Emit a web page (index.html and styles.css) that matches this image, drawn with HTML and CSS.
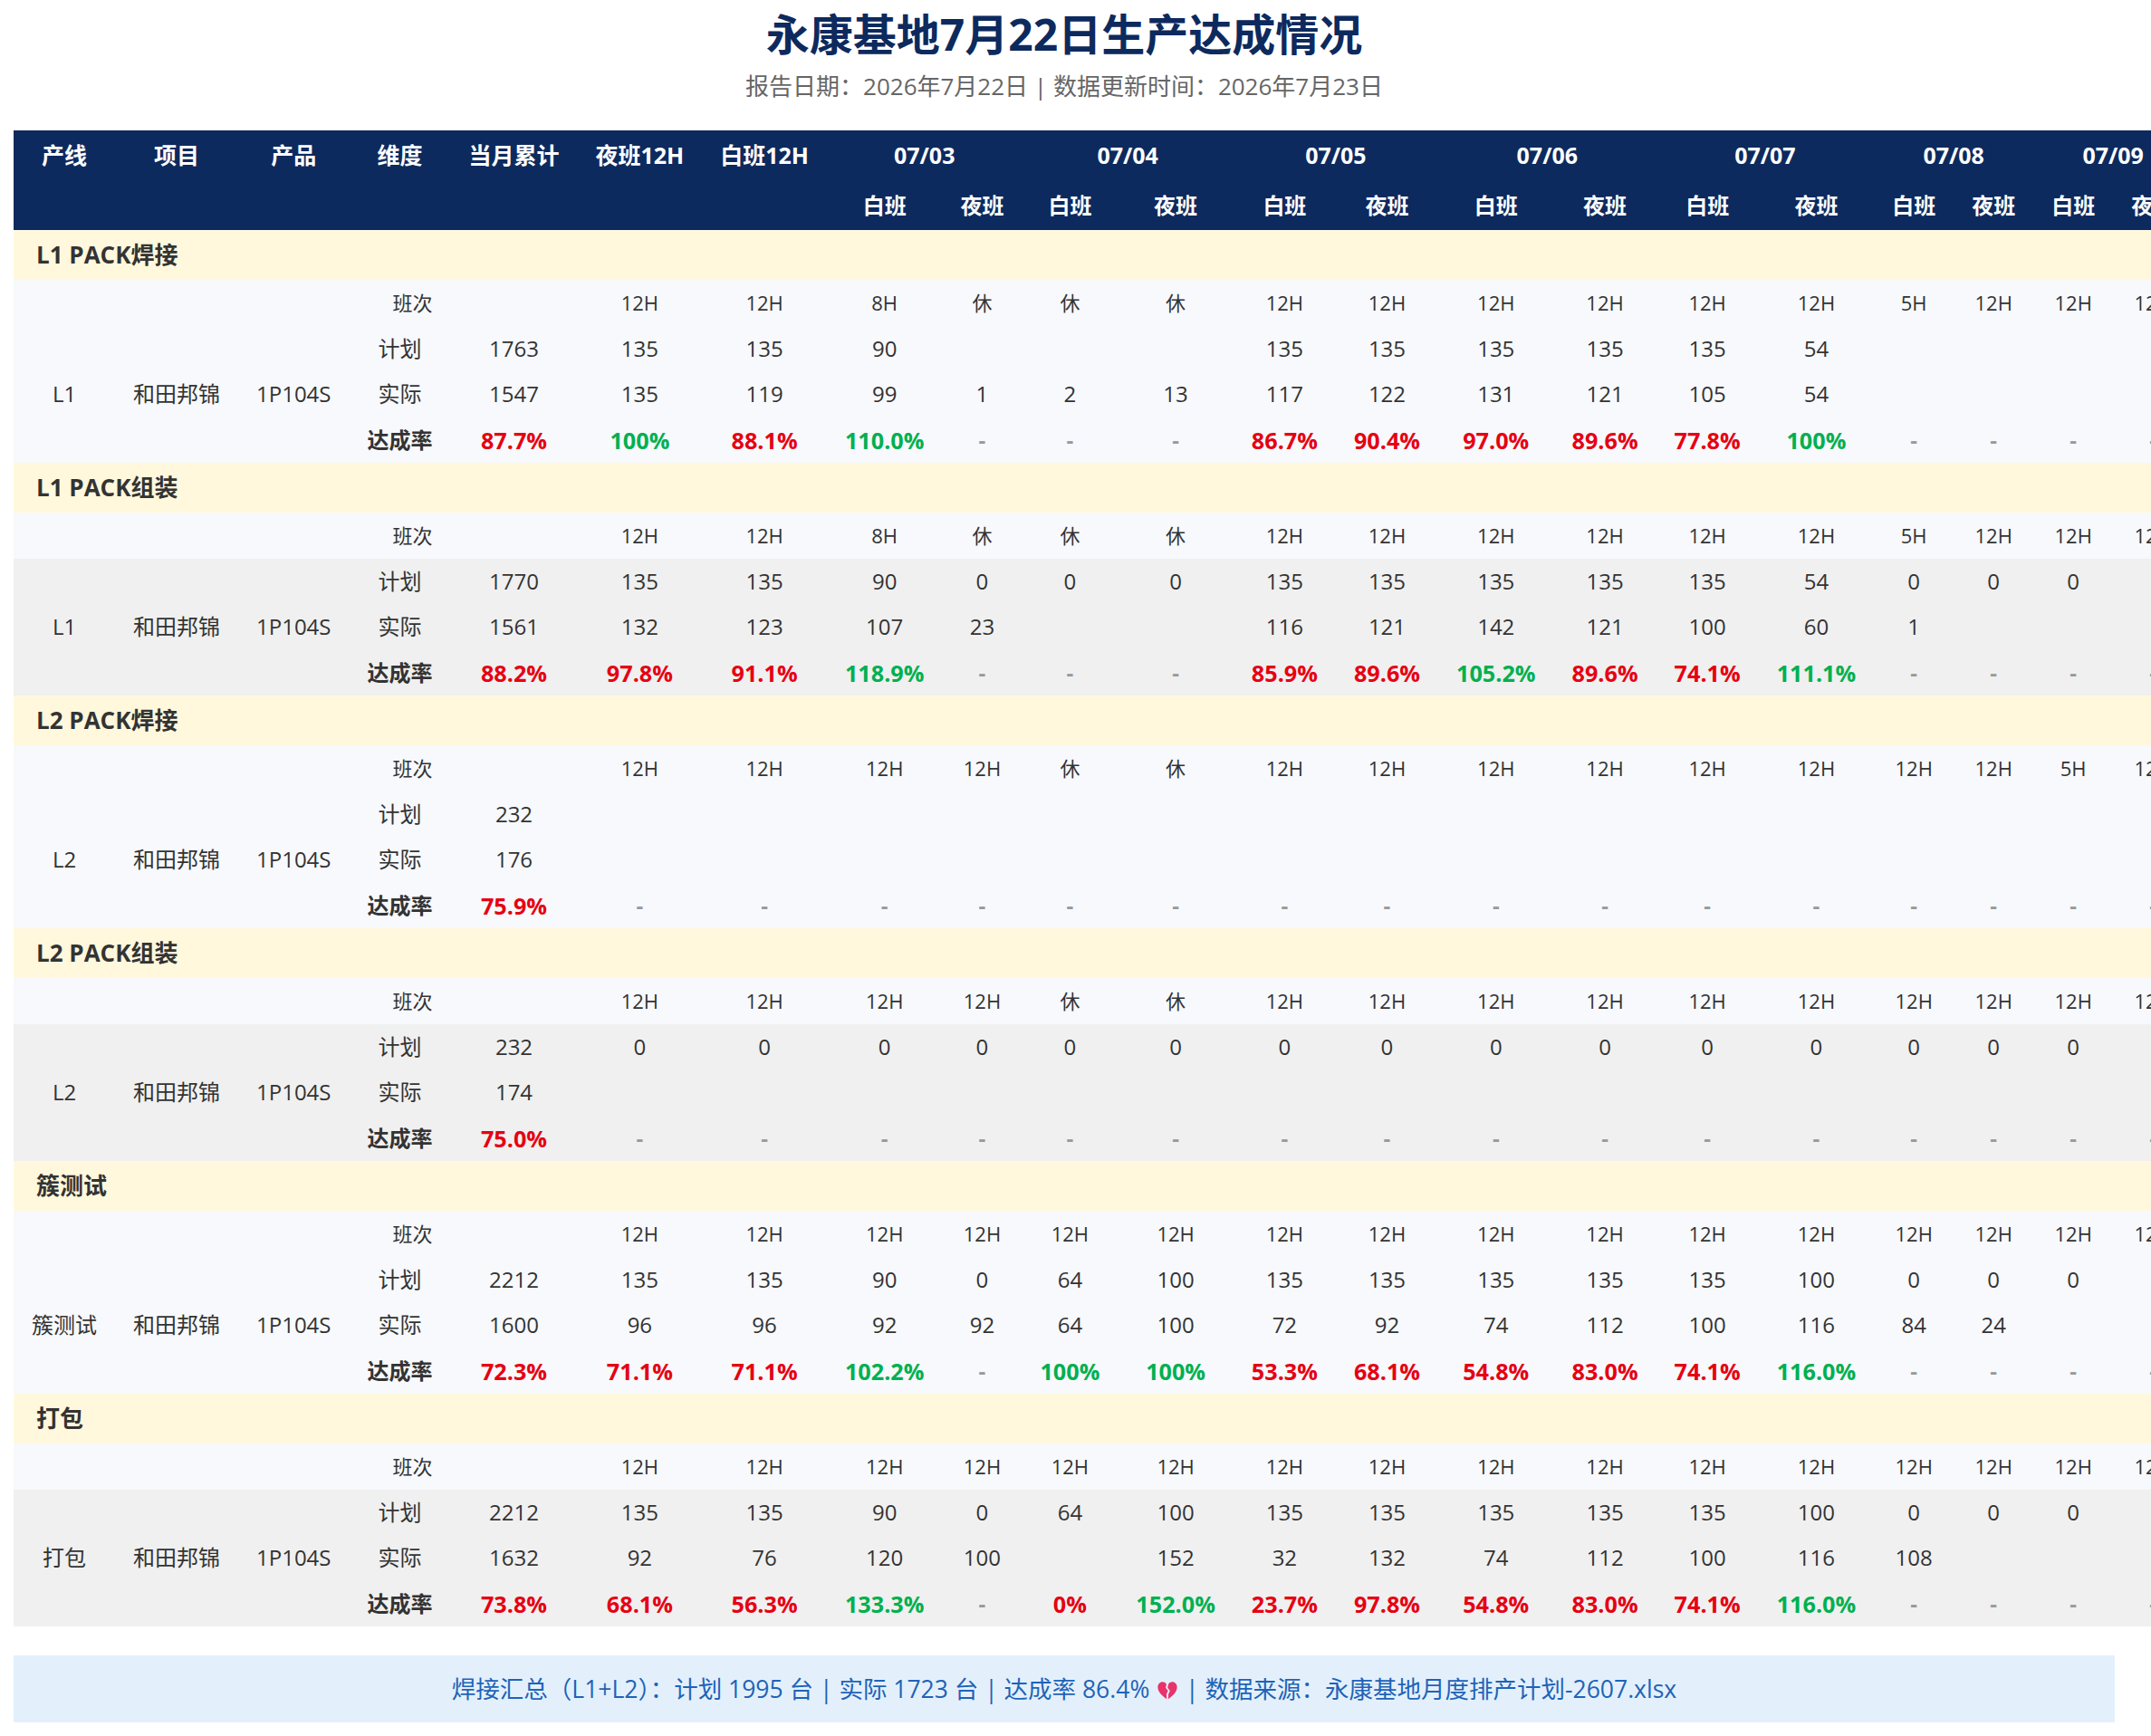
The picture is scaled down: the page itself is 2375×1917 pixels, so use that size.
FILE: index.html
```html
<!DOCTYPE html>
<html lang="zh-CN">
<head>
<meta charset="utf-8">
<title>永康基地7月22日生产达成情况</title>
<link rel="stylesheet" href="styles.css">
</head>
<body>
<h1 class="title">永康基地7月22日生产达成情况</h1>
<p class="subtitle">报告日期：2026年7月22日 | 数据更新时间：2026年7月23日</p>
<div class="table-wrap">
<table class="report">
<thead>
<tr class="top">
<th>产线</th><th>项目</th><th>产品</th><th>维度</th><th>当月累计</th><th>夜班12H</th><th>白班12H</th>
<th colspan="2">07/03</th><th colspan="2">07/04</th><th colspan="2">07/05</th><th colspan="2">07/06</th><th colspan="2">07/07</th><th colspan="2">07/08</th><th colspan="2">07/09</th>
</tr>
<tr>
<th></th><th></th><th></th><th></th><th></th><th></th><th></th>
<th>白班</th><th>夜班</th><th>白班</th><th>夜班</th><th>白班</th><th>夜班</th><th>白班</th><th>夜班</th><th>白班</th><th>夜班</th><th>白班</th><th>夜班</th><th>白班</th><th>夜班</th>
</tr>
</thead>

<tbody>
<tr class="grp"><td colspan="21">L1 PACK焊接</td></tr>
<tr class="shift"><td></td><td></td><td></td><td class="lbl">班次</td><td></td><td>12H</td><td>12H</td><td>8H</td><td>休</td><td>休</td><td>休</td><td>12H</td><td>12H</td><td>12H</td><td>12H</td><td>12H</td><td>12H</td><td>5H</td><td>12H</td><td>12H</td><td>12H</td></tr>
<tr><td rowspan="3">L1</td><td rowspan="3">和田邦锦</td><td rowspan="3">1P104S</td><td>计划</td><td>1763</td><td>135</td><td>135</td><td>90</td><td></td><td></td><td></td><td>135</td><td>135</td><td>135</td><td>135</td><td>135</td><td>54</td><td></td><td></td><td></td><td></td></tr>
<tr><td>实际</td><td>1547</td><td>135</td><td>119</td><td>99</td><td>1</td><td>2</td><td>13</td><td>117</td><td>122</td><td>131</td><td>121</td><td>105</td><td>54</td><td></td><td></td><td></td><td></td></tr>
<tr><td class="b">达成率</td><td class="r">87.7%</td><td class="g">100%</td><td class="r">88.1%</td><td class="g">110.0%</td><td class="d">-</td><td class="d">-</td><td class="d">-</td><td class="r">86.7%</td><td class="r">90.4%</td><td class="r">97.0%</td><td class="r">89.6%</td><td class="r">77.8%</td><td class="g">100%</td><td class="d">-</td><td class="d">-</td><td class="d">-</td><td class="d">-</td></tr>
</tbody>

<tbody class="alt">
<tr class="grp"><td colspan="21">L1 PACK组装</td></tr>
<tr class="shift"><td></td><td></td><td></td><td class="lbl">班次</td><td></td><td>12H</td><td>12H</td><td>8H</td><td>休</td><td>休</td><td>休</td><td>12H</td><td>12H</td><td>12H</td><td>12H</td><td>12H</td><td>12H</td><td>5H</td><td>12H</td><td>12H</td><td>12H</td></tr>
<tr><td rowspan="3">L1</td><td rowspan="3">和田邦锦</td><td rowspan="3">1P104S</td><td>计划</td><td>1770</td><td>135</td><td>135</td><td>90</td><td>0</td><td>0</td><td>0</td><td>135</td><td>135</td><td>135</td><td>135</td><td>135</td><td>54</td><td>0</td><td>0</td><td>0</td><td></td></tr>
<tr><td>实际</td><td>1561</td><td>132</td><td>123</td><td>107</td><td>23</td><td></td><td></td><td>116</td><td>121</td><td>142</td><td>121</td><td>100</td><td>60</td><td>1</td><td></td><td></td><td></td></tr>
<tr><td class="b">达成率</td><td class="r">88.2%</td><td class="r">97.8%</td><td class="r">91.1%</td><td class="g">118.9%</td><td class="d">-</td><td class="d">-</td><td class="d">-</td><td class="r">85.9%</td><td class="r">89.6%</td><td class="g">105.2%</td><td class="r">89.6%</td><td class="r">74.1%</td><td class="g">111.1%</td><td class="d">-</td><td class="d">-</td><td class="d">-</td><td class="d">-</td></tr>
</tbody>

<tbody>
<tr class="grp"><td colspan="21">L2 PACK焊接</td></tr>
<tr class="shift"><td></td><td></td><td></td><td class="lbl">班次</td><td></td><td>12H</td><td>12H</td><td>12H</td><td>12H</td><td>休</td><td>休</td><td>12H</td><td>12H</td><td>12H</td><td>12H</td><td>12H</td><td>12H</td><td>12H</td><td>12H</td><td>5H</td><td>12H</td></tr>
<tr><td rowspan="3">L2</td><td rowspan="3">和田邦锦</td><td rowspan="3">1P104S</td><td>计划</td><td>232</td><td></td><td></td><td></td><td></td><td></td><td></td><td></td><td></td><td></td><td></td><td></td><td></td><td></td><td></td><td></td><td></td></tr>
<tr><td>实际</td><td>176</td><td></td><td></td><td></td><td></td><td></td><td></td><td></td><td></td><td></td><td></td><td></td><td></td><td></td><td></td><td></td><td></td></tr>
<tr><td class="b">达成率</td><td class="r">75.9%</td><td class="d">-</td><td class="d">-</td><td class="d">-</td><td class="d">-</td><td class="d">-</td><td class="d">-</td><td class="d">-</td><td class="d">-</td><td class="d">-</td><td class="d">-</td><td class="d">-</td><td class="d">-</td><td class="d">-</td><td class="d">-</td><td class="d">-</td><td class="d">-</td></tr>
</tbody>

<tbody class="alt">
<tr class="grp"><td colspan="21">L2 PACK组装</td></tr>
<tr class="shift"><td></td><td></td><td></td><td class="lbl">班次</td><td></td><td>12H</td><td>12H</td><td>12H</td><td>12H</td><td>休</td><td>休</td><td>12H</td><td>12H</td><td>12H</td><td>12H</td><td>12H</td><td>12H</td><td>12H</td><td>12H</td><td>12H</td><td>12H</td></tr>
<tr><td rowspan="3">L2</td><td rowspan="3">和田邦锦</td><td rowspan="3">1P104S</td><td>计划</td><td>232</td><td>0</td><td>0</td><td>0</td><td>0</td><td>0</td><td>0</td><td>0</td><td>0</td><td>0</td><td>0</td><td>0</td><td>0</td><td>0</td><td>0</td><td>0</td><td></td></tr>
<tr><td>实际</td><td>174</td><td></td><td></td><td></td><td></td><td></td><td></td><td></td><td></td><td></td><td></td><td></td><td></td><td></td><td></td><td></td><td></td></tr>
<tr><td class="b">达成率</td><td class="r">75.0%</td><td class="d">-</td><td class="d">-</td><td class="d">-</td><td class="d">-</td><td class="d">-</td><td class="d">-</td><td class="d">-</td><td class="d">-</td><td class="d">-</td><td class="d">-</td><td class="d">-</td><td class="d">-</td><td class="d">-</td><td class="d">-</td><td class="d">-</td><td class="d">-</td></tr>
</tbody>

<tbody>
<tr class="grp"><td colspan="21">簇测试</td></tr>
<tr class="shift"><td></td><td></td><td></td><td class="lbl">班次</td><td></td><td>12H</td><td>12H</td><td>12H</td><td>12H</td><td>12H</td><td>12H</td><td>12H</td><td>12H</td><td>12H</td><td>12H</td><td>12H</td><td>12H</td><td>12H</td><td>12H</td><td>12H</td><td>12H</td></tr>
<tr><td rowspan="3">簇测试</td><td rowspan="3">和田邦锦</td><td rowspan="3">1P104S</td><td>计划</td><td>2212</td><td>135</td><td>135</td><td>90</td><td>0</td><td>64</td><td>100</td><td>135</td><td>135</td><td>135</td><td>135</td><td>135</td><td>100</td><td>0</td><td>0</td><td>0</td><td></td></tr>
<tr><td>实际</td><td>1600</td><td>96</td><td>96</td><td>92</td><td>92</td><td>64</td><td>100</td><td>72</td><td>92</td><td>74</td><td>112</td><td>100</td><td>116</td><td>84</td><td>24</td><td></td><td></td></tr>
<tr><td class="b">达成率</td><td class="r">72.3%</td><td class="r">71.1%</td><td class="r">71.1%</td><td class="g">102.2%</td><td class="d">-</td><td class="g">100%</td><td class="g">100%</td><td class="r">53.3%</td><td class="r">68.1%</td><td class="r">54.8%</td><td class="r">83.0%</td><td class="r">74.1%</td><td class="g">116.0%</td><td class="d">-</td><td class="d">-</td><td class="d">-</td><td class="d">-</td></tr>
</tbody>

<tbody class="alt">
<tr class="grp"><td colspan="21">打包</td></tr>
<tr class="shift"><td></td><td></td><td></td><td class="lbl">班次</td><td></td><td>12H</td><td>12H</td><td>12H</td><td>12H</td><td>12H</td><td>12H</td><td>12H</td><td>12H</td><td>12H</td><td>12H</td><td>12H</td><td>12H</td><td>12H</td><td>12H</td><td>12H</td><td>12H</td></tr>
<tr><td rowspan="3">打包</td><td rowspan="3">和田邦锦</td><td rowspan="3">1P104S</td><td>计划</td><td>2212</td><td>135</td><td>135</td><td>90</td><td>0</td><td>64</td><td>100</td><td>135</td><td>135</td><td>135</td><td>135</td><td>135</td><td>100</td><td>0</td><td>0</td><td>0</td><td></td></tr>
<tr><td>实际</td><td>1632</td><td>92</td><td>76</td><td>120</td><td>100</td><td></td><td>152</td><td>32</td><td>132</td><td>74</td><td>112</td><td>100</td><td>116</td><td>108</td><td></td><td></td><td></td></tr>
<tr><td class="b">达成率</td><td class="r">73.8%</td><td class="r">68.1%</td><td class="r">56.3%</td><td class="g">133.3%</td><td class="d">-</td><td class="r">0%</td><td class="g">152.0%</td><td class="r">23.7%</td><td class="r">97.8%</td><td class="r">54.8%</td><td class="r">83.0%</td><td class="r">74.1%</td><td class="g">116.0%</td><td class="d">-</td><td class="d">-</td><td class="d">-</td><td class="d">-</td></tr>
</tbody>
</table>
</div>
<div class="summary">焊接汇总（L1+L2）：计划 1995 台 | 实际 1723 台 | 达成率 86.4% <svg class="heart" viewBox="0 0 24 24" width="26" height="30" aria-hidden="true"><path d="M11.3 21.5C7 18.5 2.2 14.6 2.2 9.3 2.2 6.4 4.3 4 7 4c1.9 0 3.2 1 4 2.3L10.2 10l2.4 3-1.6 3.4z" fill="#e8336b"/><path d="M12.8 21.5c4.3-3 9-6.9 9-12.2C21.8 6.4 19.7 4 17 4c-1.9 0-3.2 1-4 2.3L12.2 10l2.4 3-1.6 3.4z" fill="#e8336b"/></svg> | 数据来源：永康基地月度排产计划-2607.xlsx</div>
</body>
</html>
```
FILE: styles.css
```css
html, body {
  margin: 0;
  background: #ffffff;
}
body {
  padding: 0 40px 4px 15px;
  font-family: "Open Sans", "Noto Sans CJK SC", sans-serif;
  color: #333333;
}
.title {
  margin: 0;
  padding-top: 9px;
  font-size: 48px;
  line-height: 58px;
  font-weight: 700;
  color: #0d2a5e;
  text-align: center;
}
.subtitle {
  margin: 10px 0 31px;
  font-size: 26px;
  line-height: 36px;
  color: #666666;
  text-align: center;
}
.table-wrap {
  overflow: hidden;
  margin-right: -40px;
}
.report {
  border-collapse: collapse;
  border-spacing: 0;
  white-space: nowrap;
  font-size: 24px;
}
.report th {
  background: #0d2a5e;
  color: #ffffff;
  font-weight: 700;
  font-size: 24px;
  padding: 10px 20px;
  line-height: 35px;
  text-align: center;
}
.report tr.top th {
  font-size: 25px;
}
.report td {
  padding: 8px 20px;
  line-height: 34.5px;
  text-align: center;
  background: #f7f9fc;
}
.report .alt tr td {
  background: #f0f0f0;
}
.report tr.shift td,
.report .alt tr.shift td {
  background: #f7f9fc;
  font-size: 22px;
}
.report tr.shift td.lbl {
  text-align: right;
}
.report tr.grp td,
.report .alt tr.grp td {
  background: #fff8dc;
  text-align: left;
  font-weight: 700;
  font-size: 26px;
  line-height: 37px;
  padding: 9px 25px;
}
.report td.b {
  font-weight: 700;
}
.report td.r {
  color: #e60012;
  font-weight: 700;
  font-size: 25.2px;
}
.report td.g {
  color: #00b050;
  font-weight: 700;
  font-size: 25.2px;
}
.report td.d {
  color: #999999;
  font-weight: 700;
}
.summary {
  margin-top: 32px;
  height: 74px;
  line-height: 74px;
  background: #e3f0fc;
  color: #1e63b8;
  font-size: 26.5px;
  text-align: center;
}
.heart {
  vertical-align: -6px;
}
```
